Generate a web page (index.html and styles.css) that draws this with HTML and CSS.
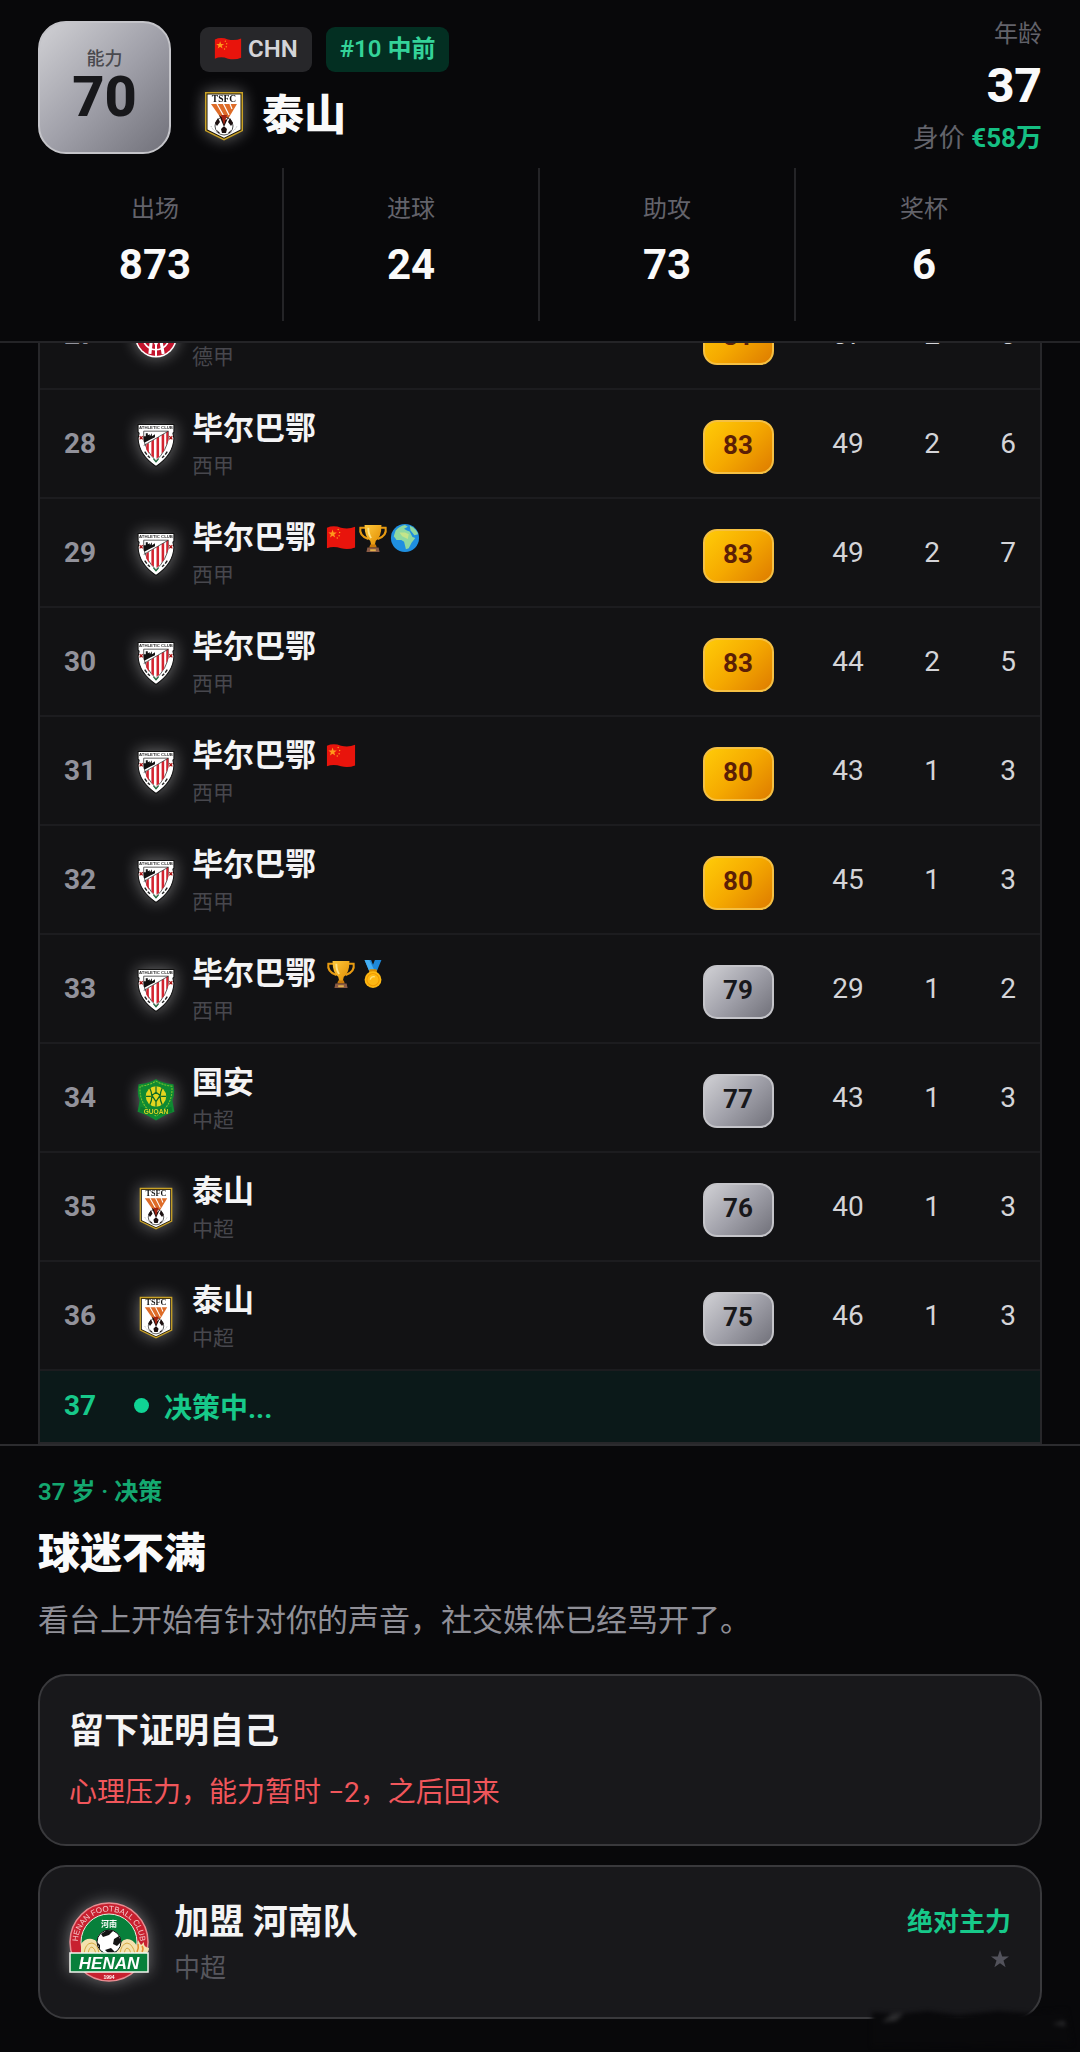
FILE: index.html
```html
<!DOCTYPE html>
<html lang="zh-CN">
<head>
    <meta charset="UTF-8">
    <meta name="viewport" content="width=device-width, initial-scale=1.0">
    <title>球员生涯</title>
    <link rel="stylesheet" href="styles.css">
</head>
<body>
    <!-- shared icons -->
    <svg class="sprite" aria-hidden="true">
        <defs>
            <linearGradient id="gold" x1="0" y1="0" x2="1" y2="1">
                <stop offset="0" stop-color="#ffc93c"/>
                <stop offset="1" stop-color="#e08a00"/>
            </linearGradient>
            <symbol id="taishan" viewBox="0 0 38 50">
                <path d="M0 1H38V40L19 49.500L0 40Z" fill="#c9a227"/>
                <path d="M1.500 2.500H36.500V39.200L19 47.800L1.500 39.200Z" fill="#1a1408"/>
                <path d="M2.500 3.500H35.500V38.600L19 46.700L2.500 38.600Z" fill="#fff"/>
                <text x="19" y="11" font-family="Liberation Serif" font-weight="bold" font-size="9.500" text-anchor="middle" fill="#111">TSFC</text>
                <path d="M6 13H32L20 33Z" fill="#de6c28"/>
                <path d="M12 13L21 29M18.500 13L24 24M25 13L27 18" stroke="#fff" stroke-width="1.200"/>
                <circle cx="19" cy="35" r="9" fill="#fff" stroke="#222" stroke-width=".8"/>
                <path d="M14 24L19 36L24 25L21 29ZM10 32L13 27L15 31L12 35ZM28 32L25 27L23 31L26 35ZM16 38L19 35L22 38L21 42H17ZM12 39L15 42L13 42ZM26 39L23 42L25 42Z" fill="#1c1010"/>
                <path d="M16 24L19 34L22 24Z" fill="#a32310"/>
                <path d="M6 35Q9 42 19 44Q29 42 32 35" fill="none" stroke="#888" stroke-width=".7" stroke-dasharray="1 1"/>
            </symbol>
            <symbol id="bilbao" viewBox="0 0 36 42">
                <path d="M.500 .500H35.500V8L34.500 9L35.500 14Q35 30 18 41.500Q1 30 .500 14L1.500 9L.500 8Z" fill="#fff" stroke="#111" stroke-width="1"/>
                <text x="18" y="5.200" font-family="Liberation Sans" font-weight="bold" font-size="4.200" text-anchor="middle" fill="#333">ATHLETIC CLUB</text>
                <path d="M6 7H30V14Q29 25 18 36Q7 25 6 14Z" fill="#fff" stroke="#222" stroke-width=".7"/>
                <path d="M8.500 20L11 18.500V29L8.500 25ZM13.500 17L16 15.500V33L13.500 31ZM18.500 14L21 12.500V32L18.500 34ZM23.500 11L26 9.500V26L23.500 29ZM28 8L30 7V16L28 21Z" fill="#d3232f"/>
                <path d="M6 17V12L8 12V9H10V11L12 10V12L14 9V12L17 10V13L13 15L7 18Z" fill="#111"/>
                <path d="M6 21L30 7" stroke="#222" stroke-width=".7"/>
                <path d="M2 12L5 15M5 12L2 15M31 12L34 15M34 12L31 15" stroke="#a11" stroke-width="1.200"/>
                <path d="M7 27L9 30M10 31L12 33M24 33L26 31M27 30L29 27" stroke="#222" stroke-width="1.400"/>
                <path d="M15.500 34L18 37L20.500 34" fill="none" stroke="#1d6b3c" stroke-width="1"/>
            </symbol>
            <symbol id="guoan" viewBox="0 0 38 42">
                <path d="M19 1Q24 5 36 6Q38 15 35 22L37 33L29 36Q25 38 19 41.500Q13 38 9 36L1 33L3 22Q0 15 2 6Q14 5 19 1Z" fill="#0f8a32"/>
                <path d="M19 3Q25 7 34.500 8Q36 27 19 37Q2 27 3.500 8Q13 7 19 3Z" fill="none" stroke="#7cc42d" stroke-width="1" stroke-dasharray="2 1"/>
                <circle cx="19" cy="18" r="10" fill="#e2d51f"/>
                <path d="M13 10Q17 18 13 26M25 10Q21 18 25 26M19 8V14M15 17L19 14L23 17L19 23ZM19 23V28M9 18H14M24 18H29" fill="none" stroke="#0d6b27" stroke-width="1.200"/>
                <path d="M4 28Q19 34 34 28L35 33Q19 39 3 33Z" fill="#0c7a2b"/>
                <text x="19" y="35" font-family="Liberation Sans" font-weight="bold" font-size="6.500" text-anchor="middle" fill="#d9d426">GUOAN</text>
            </symbol>
            <symbol id="mainz" viewBox="0 0 42 42">
                <circle cx="21" cy="21" r="20.500" fill="#fff"/>
                <circle cx="21" cy="21" r="19" fill="#c3142d"/>
                <circle cx="21" cy="21" r="13" fill="none" stroke="#fff" stroke-width="1.500"/>
                <path d="M15 38L17 20L21 28L25 20L28 38" fill="none" stroke="#fff" stroke-width="3"/>
                <path d="M21 26V40" stroke="#fff" stroke-width="2"/>
            </symbol>
            <symbol id="henan" viewBox="0 0 80 80">
                <circle cx="40" cy="40" r="39" fill="#c8202f" stroke="#e98c92" stroke-width="1.500"/>
                <circle cx="40" cy="40" r="28" fill="#07803b" stroke="#e8f0e0" stroke-width="1"/>
                <path id="henan-arc" d="M9.500 46A31 31 0 1 1 70.500 46" fill="none"/>
                <text font-family="Liberation Sans" font-size="8" fill="#f6c9cb"><textPath href="#henan-arc" startOffset="50%" text-anchor="middle">HENAN FOOTBALL CLUB</textPath></text>
                <text x="40" y="25" font-family="Noto Sans CJK SC" font-weight="bold" font-size="8" text-anchor="middle" fill="#fff">河南</text>
                <path d="M12 52V42Q16 36 23 37Q30 38 33 52ZM47 52Q50 38 58 37Q64 37 68 44L69 38L72 43L75 40Q74 45 80 46Q80 50 76 52Z" fill="#f4e2ae"/>
                <path d="M15 52Q16 41 23 41Q29 42 30 52M19 52Q20 45 23 45Q26 46 27 52M51 52Q52 42 58 41Q64 42 66 52M55 52Q56 46 58 46Q61 46 62 52" fill="none" stroke="#d7a944" stroke-width="1"/>
                <path d="M68 50Q70 46 69 42M73 50Q75 47 73 44" fill="none" stroke="#e58b2c" stroke-width="1.500"/>
                <circle cx="40" cy="40" r="12" fill="#fff" stroke="#111" stroke-width="1"/>
                <path d="M32 32L38 28L44 29L40 33L34 35ZM45 37L50 34L52 40L48 44L44 42ZM28 40L31 43L31 48ZM36 48L42 46L46 50L40 52Z" fill="#141414"/>
                <rect x="1" y="51" width="78" height="19" fill="#07803b" stroke="#f2f5ef" stroke-width="1.500"/>
                <text x="40" y="66.500" font-family="Liberation Sans" font-weight="bold" font-style="italic" font-size="17" text-anchor="middle" fill="#fff">HENAN</text>
                <text x="40" y="76.500" font-family="Liberation Sans" font-weight="bold" font-size="5" text-anchor="middle" fill="#fff">1994</text>
            </symbol>
            <symbol id="flag" viewBox="0 0 32 32">
                <path d="M1 5Q8 2 16 5Q24 7 31 4V26Q24 29 16 27Q8 24 1 27Z" fill="#e8140c"/>
                <path d="M7 7L8.100 10.200H11.500L8.800 12.200L9.800 15.500L7 13.500L4.200 15.500L5.200 12.200L2.500 10.200H5.900Z" fill="#ff9a1c"/>
                <circle cx="13" cy="7" r=".8" fill="#ff9a1c"/>
                <circle cx="14.500" cy="10" r=".8" fill="#ff9a1c"/>
                <circle cx="14" cy="13.500" r=".8" fill="#ff9a1c"/>
                <circle cx="12" cy="16" r=".8" fill="#ff9a1c"/>
            </symbol>
            <symbol id="trophy" viewBox="0 0 32 32">
                <path d="M8 5H2.500Q1 14 11 17M24 5H29.500Q31 14 21 17" fill="none" stroke="#e89b12" stroke-width="2.200"/>
                <path d="M7 2H25Q25 15 19 19L17.500 25H14.500L13 19Q7 15 7 2Z" fill="url(#gold)"/>
                <path d="M11 5Q11 12 14 16" fill="none" stroke="#ffe48a" stroke-width="2"/>
                <path d="M13 23H19L20 26H12Z" fill="#c97a0a"/>
                <path d="M10 26H22L23 31H9Z" fill="#8a5a44"/>
                <path d="M13 28H19V30H13Z" fill="#e0b04a"/>
            </symbol>
            <symbol id="globe" viewBox="0 0 32 32">
                <circle cx="16" cy="16" r="15" fill="#1f8fe0"/>
                <path d="M6 8Q10 3 16 2L19 4L15 6L18 8L21 9L24 15L27 16L23 21L20 27L17 28L15 20L12 18L7 18L4 14Z" fill="#8fd9a0"/>
                <path d="M10 10L16 10L20 12L19 17L13 14Z" fill="#c4e58a"/>
                <path d="M21 3Q28 6 30 12L26 13L22 8Z" fill="#8fd9a0"/>
            </symbol>
            <symbol id="medal" viewBox="0 0 32 32">
                <path d="M7 1H14L16 6L18 1H25L20 13H12Z" fill="#1e88d8"/>
                <path d="M7 1H12L18 13H12Z" fill="#45b0f5"/>
                <rect x="12" y="11" width="8" height="4" rx="1" fill="#d98c00"/>
                <circle cx="16" cy="22" r="9" fill="#fdb813"/>
                <circle cx="16" cy="22" r="6.500" fill="none" stroke="#f09a00" stroke-width="1.200"/>
                <path d="M13 22Q14 18 18 19" fill="none" stroke="#ffe07a" stroke-width="1.500"/>
            </symbol>
        </defs>
    </svg>

    <header class="header">
        <div class="player">
            <div class="ability">
                <span class="ability-label">能力</span>
                <span class="ability-value">70</span>
            </div>
            <div class="identity">
                <div class="chips">
                    <span class="chip"><svg class="chip-flag"><use href="#flag"/></svg>CHN</span>
                    <span class="chip chip-green">#10 中前</span>
                </div>
                <div class="club-now">
                    <svg class="crest-header"><use href="#taishan"/></svg>
                    <h1>泰山</h1>
                </div>
            </div>
            <div class="age">
                <div class="age-label">年龄</div>
                <div class="age-value">37</div>
                <div class="worth">身价 <strong>€58万</strong></div>
            </div>
        </div>
        <div class="stats">
            <div class="stat"><div class="stat-label">出场</div><div class="stat-value">873</div></div>
            <div class="stat"><div class="stat-label">进球</div><div class="stat-value">24</div></div>
            <div class="stat"><div class="stat-label">助攻</div><div class="stat-value">73</div></div>
            <div class="stat"><div class="stat-label">奖杯</div><div class="stat-value">6</div></div>
        </div>
    </header>

    <!-- season list, scrolled to the newest season -->
    <main class="seasons">
        <table class="season-table">
            <tbody>
                <tr>
                    <td class="col-age">27</td>
                    <td><div class="club"><svg class="crest"><use href="#mainz"/></svg><div><div class="club-name">美因茨</div><div class="league">德甲</div></div></div></td>
                    <td class="col-rating"><span class="rating gold">81</span></td>
                    <td class="col-apps">37</td><td class="col-goals">2</td><td class="col-assists">3</td>
                </tr>
                <tr>
                    <td class="col-age">28</td>
                    <td><div class="club"><svg class="crest"><use href="#bilbao"/></svg><div><div class="club-name">毕尔巴鄂</div><div class="league">西甲</div></div></div></td>
                    <td class="col-rating"><span class="rating gold">83</span></td>
                    <td class="col-apps">49</td><td class="col-goals">2</td><td class="col-assists">6</td>
                </tr>
                <tr>
                    <td class="col-age">29</td>
                    <td><div class="club"><svg class="crest"><use href="#bilbao"/></svg><div><div class="club-name">毕尔巴鄂<span class="honors"><svg><use href="#flag"/></svg><svg><use href="#trophy"/></svg><svg><use href="#globe"/></svg></span></div><div class="league">西甲</div></div></div></td>
                    <td class="col-rating"><span class="rating gold">83</span></td>
                    <td class="col-apps">49</td><td class="col-goals">2</td><td class="col-assists">7</td>
                </tr>
                <tr>
                    <td class="col-age">30</td>
                    <td><div class="club"><svg class="crest"><use href="#bilbao"/></svg><div><div class="club-name">毕尔巴鄂</div><div class="league">西甲</div></div></div></td>
                    <td class="col-rating"><span class="rating gold">83</span></td>
                    <td class="col-apps">44</td><td class="col-goals">2</td><td class="col-assists">5</td>
                </tr>
                <tr>
                    <td class="col-age">31</td>
                    <td><div class="club"><svg class="crest"><use href="#bilbao"/></svg><div><div class="club-name">毕尔巴鄂<span class="honors"><svg><use href="#flag"/></svg></span></div><div class="league">西甲</div></div></div></td>
                    <td class="col-rating"><span class="rating gold">80</span></td>
                    <td class="col-apps">43</td><td class="col-goals">1</td><td class="col-assists">3</td>
                </tr>
                <tr>
                    <td class="col-age">32</td>
                    <td><div class="club"><svg class="crest"><use href="#bilbao"/></svg><div><div class="club-name">毕尔巴鄂</div><div class="league">西甲</div></div></div></td>
                    <td class="col-rating"><span class="rating gold">80</span></td>
                    <td class="col-apps">45</td><td class="col-goals">1</td><td class="col-assists">3</td>
                </tr>
                <tr>
                    <td class="col-age">33</td>
                    <td><div class="club"><svg class="crest"><use href="#bilbao"/></svg><div><div class="club-name">毕尔巴鄂<span class="honors"><svg><use href="#trophy"/></svg><svg><use href="#medal"/></svg></span></div><div class="league">西甲</div></div></div></td>
                    <td class="col-rating"><span class="rating">79</span></td>
                    <td class="col-apps">29</td><td class="col-goals">1</td><td class="col-assists">2</td>
                </tr>
                <tr>
                    <td class="col-age">34</td>
                    <td><div class="club"><svg class="crest"><use href="#guoan"/></svg><div><div class="club-name">国安</div><div class="league">中超</div></div></div></td>
                    <td class="col-rating"><span class="rating">77</span></td>
                    <td class="col-apps">43</td><td class="col-goals">1</td><td class="col-assists">3</td>
                </tr>
                <tr>
                    <td class="col-age">35</td>
                    <td><div class="club"><svg class="crest"><use href="#taishan"/></svg><div><div class="club-name">泰山</div><div class="league">中超</div></div></div></td>
                    <td class="col-rating"><span class="rating">76</span></td>
                    <td class="col-apps">40</td><td class="col-goals">1</td><td class="col-assists">3</td>
                </tr>
                <tr>
                    <td class="col-age">36</td>
                    <td><div class="club"><svg class="crest"><use href="#taishan"/></svg><div><div class="club-name">泰山</div><div class="league">中超</div></div></div></td>
                    <td class="col-rating"><span class="rating">75</span></td>
                    <td class="col-apps">46</td><td class="col-goals">1</td><td class="col-assists">3</td>
                </tr>
                <tr class="current">
                    <td class="col-age">37</td>
                    <td colspan="5"><div class="deciding"><span class="dot"></span>决策中...</div></td>
                </tr>
            </tbody>
        </table>
    </main>

    <section class="decision">
        <p class="decision-tag">37 岁 · 决策</p>
        <h2>球迷不满</h2>
        <p class="decision-text">看台上开始有针对你的声音，社交媒体已经骂开了。</p>
        <div class="options">
            <button class="option" type="button">
                <span class="option-main">
                    <span class="option-title">留下证明自己</span>
                    <span class="option-warning">心理压力，能力暂时 −2，之后回来</span>
                </span>
            </button>
            <button class="option" type="button">
                <svg class="crest-option"><use href="#henan"/></svg>
                <span class="option-main">
                    <span class="option-title">加盟 河南队</span>
                    <span class="option-league">中超</span>
                </span>
                <span class="option-side">
                    <span class="role">绝对主力</span>
                    <svg class="star" viewBox="0 0 18 18"><path d="M9 0L11.200 6.500H18L12.500 10.500L14.600 17.200L9 13.200L3.400 17.200L5.500 10.500L0 6.500H6.800Z"/></svg>
                </span>
            </button>
        </div>
        <svg class="smudge" viewBox="0 0 208 48" aria-hidden="true">
            <path class="smudge-base" d="M4 8L30 10L60 7L90 11L130 7L160 9L198 6L204 40L4 42Z"/>
            <path class="smudge-mark" d="M14 18L24 10L36 9L28 17ZM184 20L196 17L198 22Z"/>
        </svg>
    </section>
</body>
</html>
```

FILE: styles.css
```css
* {
    box-sizing: border-box;
}
body {
    margin: 0;
    height: 100vh;
    display: flex;
    flex-direction: column;
    background: #08080a;
    color: #fafafa;
    font-family: Roboto, "Noto Sans CJK SC", sans-serif;
}
h1, h2, p {
    margin: 0;
}
.sprite {
    position: absolute;
    width: 0;
    height: 0;
}

/* header */
.header {
    flex: none;
    padding: 18px 0 20px;
    border-bottom: 2px solid #242427;
}
.player {
    display: flex;
    align-items: center;
    padding: 0 38px;
}
.ability {
    width: 133px;
    height: 133px;
    display: flex;
    flex-direction: column;
    align-items: center;
    justify-content: center;
    border: 2px solid #c4c4c9;
    border-radius: 28px;
    background: linear-gradient(135deg, #d0d0d4, #a1a1aa 50%, #71717a);
    color: #18181b;
}
.ability-label {
    font-size: 18px;
    line-height: 20px;
    font-weight: 500;
    color: #49494e;
}
.ability-value {
    font-size: 56px;
    line-height: 56px;
    font-weight: 800;
}
.identity {
    flex: 1;
    margin-left: 29px;
}
.chips {
    display: flex;
    gap: 14px;
    margin-bottom: 12px;
}
.chip {
    display: flex;
    align-items: center;
    height: 45px;
    padding: 0 14px;
    border-radius: 9px;
    background: #27272a;
    color: #d4d4d8;
    font-size: 24px;
    line-height: 32px;
    font-weight: 600;
}
.chip-green {
    background: #032f22;
    color: #34d399;
}
.chip-flag {
    width: 28px;
    height: 28px;
    margin-right: 6px;
}
.club-now {
    display: flex;
    align-items: center;
    gap: 14px;
    height: 64px;
}
.crest-header {
    width: 48px;
    height: 50px;
    filter: drop-shadow(0 0 8px rgba(255, 255, 255, 0.4));
}
h1 {
    font-size: 42px;
    line-height: 56px;
    font-weight: 900;
}
.age {
    text-align: right;
}
.age-label {
    font-size: 24px;
    line-height: 32px;
    color: #63636b;
}
.age-value {
    margin: 8px 0 6px;
    font-size: 48px;
    line-height: 56px;
    font-weight: 800;
}
.worth {
    font-size: 26px;
    line-height: 36px;
    color: #63636b;
}
.worth strong {
    color: #15bf83;
}
.stats {
    display: grid;
    grid-template-columns: repeat(4, 1fr);
    margin: 12px 28px 0;
    text-align: center;
}
.stat {
    padding: 23px 0 28px;
    border-right: 2px solid #242427;
}
.stat:last-child {
    border-right: none;
}
.stat-label {
    margin-bottom: 10px;
    font-size: 24px;
    line-height: 36px;
    color: #63636b;
}
.stat-value {
    font-size: 42px;
    line-height: 56px;
    font-weight: 700;
}

/* seasons */
.seasons {
    flex: 1;
    min-height: 0;
    display: flex;
    flex-direction: column;
    justify-content: flex-end;
    overflow: hidden;
    padding: 0 38px;
}
.season-table {
    width: 100%;
    table-layout: auto;
    border: 2px solid #27272a;
    border-spacing: 0;
    background: #121214;
    font-size: 28px;
    text-align: center;
}
td {
    height: 109px;
    padding: 0;
    border-bottom: 2px solid #1c1c1f;
    color: #d4d4d8;
}
.col-age {
    width: 92px;
    padding-left: 24px;
    color: #92929b;
    font-weight: 700;
    text-align: left;
}
.col-rating {
    width: 100px;
}
.col-apps {
    width: 120px;
}
.col-goals {
    width: 48px;
}
.col-assists {
    width: 84px;
    padding-left: 20px;
}
.club {
    display: flex;
    align-items: center;
    gap: 12px;
    padding-top: 3px;
    text-align: left;
}
.crest {
    width: 48px;
    height: 43px;
    filter: drop-shadow(0 0 8px rgba(255, 255, 255, 0.4));
}
.club-name {
    display: flex;
    align-items: center;
    gap: 9px;
    font-size: 31px;
    line-height: 40px;
    font-weight: 700;
    color: #f4f4f5;
}
.honors {
    display: flex;
}
.honors svg {
    width: 32px;
    height: 30px;
}
.league {
    margin-top: 2px;
    font-size: 21px;
    line-height: 30px;
    color: #47474d;
}
.rating {
    display: inline-block;
    width: 71px;
    margin-top: 6px;
    padding-bottom: 4px;
    border: 2px solid #c4c4c9;
    border-radius: 14px;
    background: linear-gradient(135deg, #d0d0d4, #a1a1aa 50%, #71717a);
    color: #18181b;
    font-size: 26px;
    line-height: 46px;
    font-weight: 700;
}
.rating.gold {
    border-color: #f5c043;
    background: linear-gradient(135deg, #ffcb08, #f5a900 50%, #de7c00);
    color: #5c1f06;
}
.current td {
    height: 71px;
    padding-bottom: 2px;
    border-bottom: none;
    background: #0b1919;
    color: #17c98a;
    font-weight: 700;
}
.deciding {
    display: flex;
    align-items: center;
    gap: 15px;
    padding-left: 2px;
}
.dot {
    width: 15px;
    height: 15px;
    border-radius: 50%;
    background: #10d494;
}

/* decision panel */
.decision {
    position: relative;
    flex: none;
    padding: 28px 38px 33px;
    border-top: 2px solid #2c2c2f;
}
.decision-tag {
    font-size: 24px;
    line-height: 36px;
    font-weight: 600;
    color: #14a870;
}
h2 {
    margin-top: 16px;
    font-size: 42px;
    line-height: 56px;
    font-weight: 900;
}
.decision-text {
    margin-top: 16px;
    font-size: 31px;
    line-height: 46px;
    color: #8f8f97;
}
.options {
    display: flex;
    flex-direction: column;
    gap: 19px;
    margin-top: 30px;
}
.option {
    display: flex;
    align-items: center;
    width: 100%;
    padding: 31px 29px;
    border: 2px solid #39393c;
    border-radius: 28px;
    background: #18181b;
    color: #f4f4f5;
    font-family: inherit;
    text-align: left;
    cursor: pointer;
}
.option-main {
    flex: 1;
    display: flex;
    flex-direction: column;
}
.option-title {
    font-size: 35px;
    line-height: 50px;
    font-weight: 700;
}
.option-warning {
    margin-top: 16px;
    font-size: 28px;
    line-height: 40px;
    color: #f1565b;
}
.option-league {
    margin-top: 2px;
    font-size: 26px;
    line-height: 36px;
    color: #56565d;
}
.crest-option {
    width: 80px;
    height: 80px;
    margin-right: 25px;
    filter: drop-shadow(0 0 8px rgba(255, 255, 255, 0.4));
}
.option-side {
    display: flex;
    flex-direction: column;
    align-items: flex-end;
    gap: 10px;
    padding-bottom: 12px;
}
.role {
    font-size: 26px;
    line-height: 36px;
    font-weight: 700;
    color: #17c98a;
}
.star {
    width: 18px;
    height: 18px;
    margin-right: 2px;
    fill: #52525b;
}
.smudge {
    position: absolute;
    right: 4px;
    bottom: 0;
    width: 208px;
    height: 48px;
    filter: blur(2px);
    pointer-events: none;
}
.smudge-base {
    fill: #09090b;
}
.smudge-mark {
    fill: #2c2c2e;
}
```
